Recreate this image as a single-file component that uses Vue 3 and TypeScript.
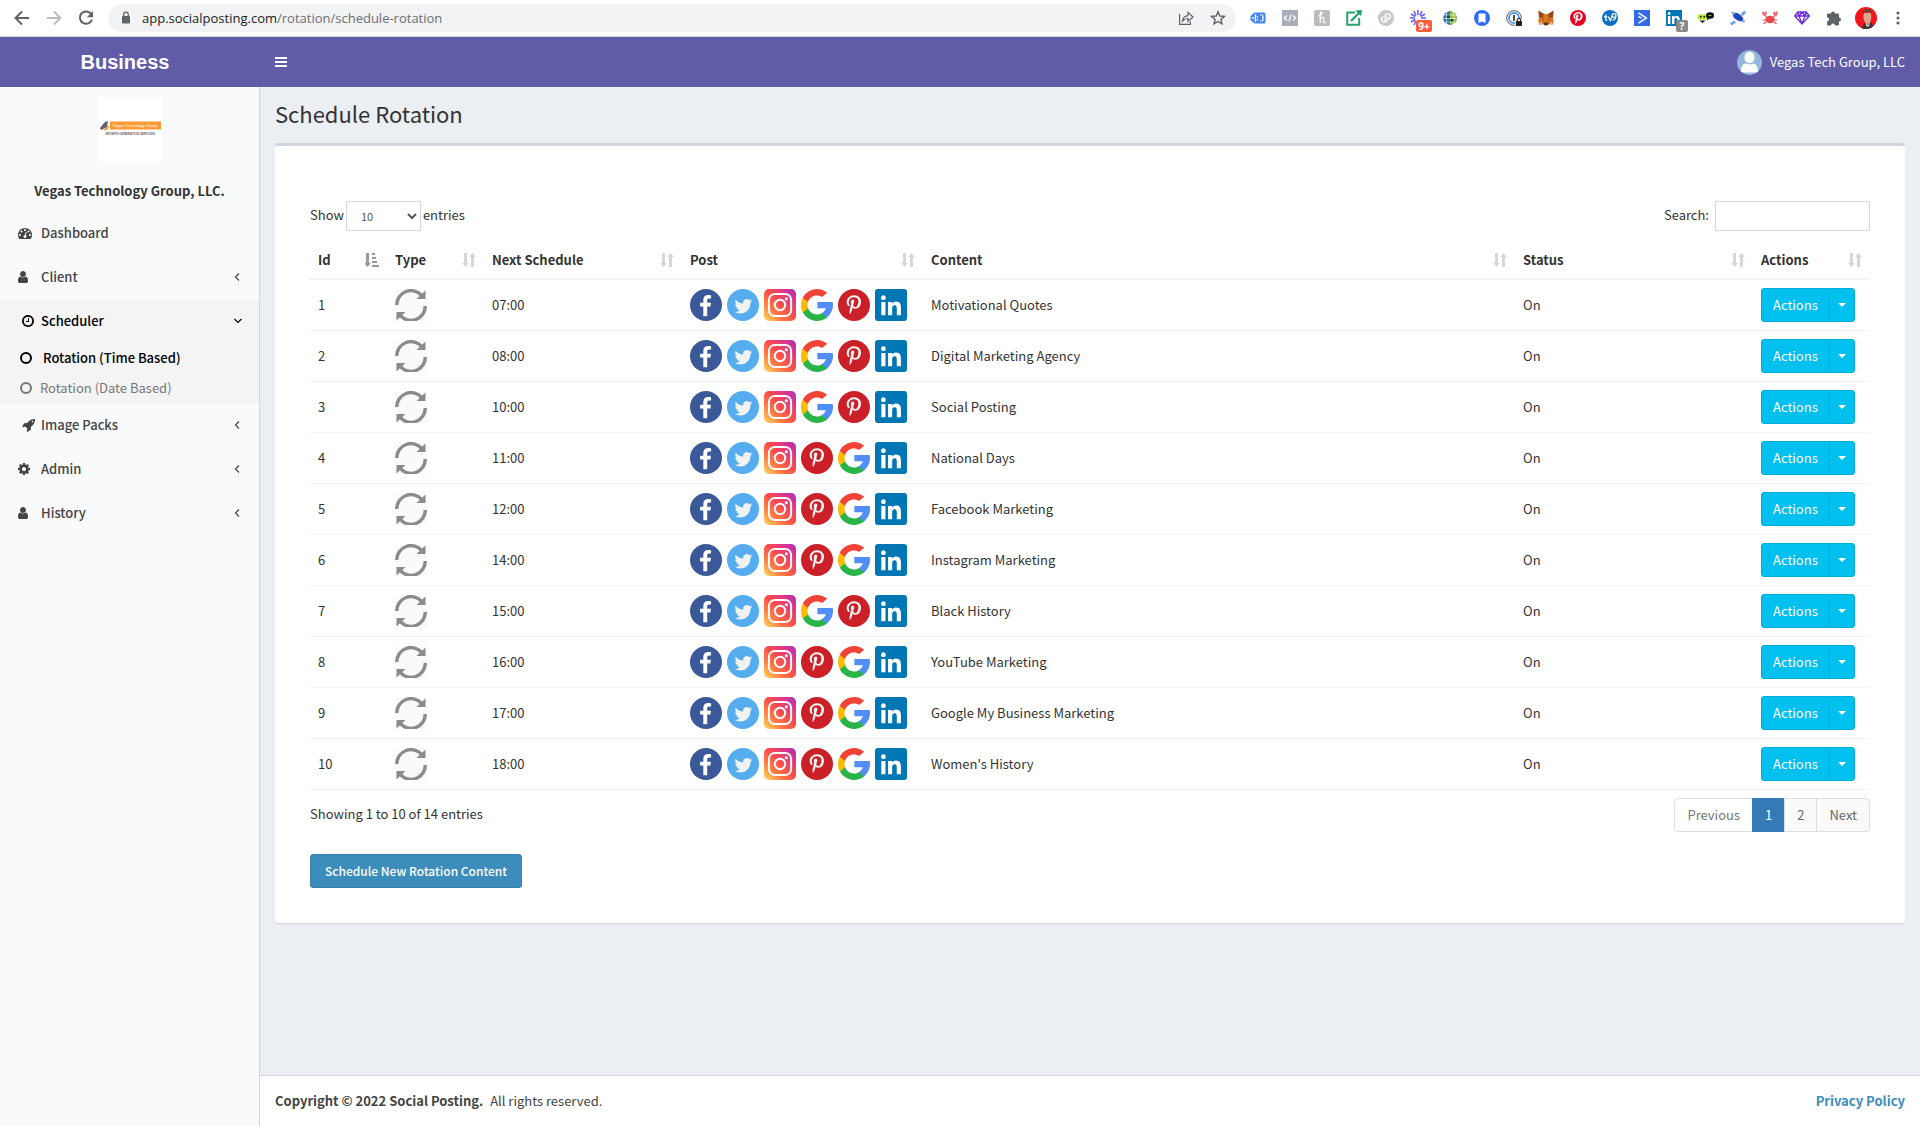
<script setup lang="ts">
import { ref } from 'vue'

type Network = 'facebook' | 'twitter' | 'instagram' | 'google' | 'pinterest' | 'linkedin'

interface Rotation {
  id: number
  time: string
  content: string
  networks: Network[]
}

interface MenuItem {
  label: string
  icon: string
  box: string
  width: number
  inset?: boolean
  arrow?: boolean
  open?: boolean
}

const googleFirst: Network[] = ['facebook', 'twitter', 'instagram', 'google', 'pinterest', 'linkedin']
const pinterestFirst: Network[] = ['facebook', 'twitter', 'instagram', 'pinterest', 'google', 'linkedin']

const rotations: Rotation[] = [
  { id: 1, time: '07:00', content: 'Motivational Quotes', networks: googleFirst },
  { id: 2, time: '08:00', content: 'Digital Marketing Agency', networks: googleFirst },
  { id: 3, time: '10:00', content: 'Social Posting', networks: googleFirst },
  { id: 4, time: '11:00', content: 'National Days', networks: pinterestFirst },
  { id: 5, time: '12:00', content: 'Facebook Marketing', networks: pinterestFirst },
  { id: 6, time: '14:00', content: 'Instagram Marketing', networks: pinterestFirst },
  { id: 7, time: '15:00', content: 'Black History', networks: googleFirst },
  { id: 8, time: '16:00', content: 'YouTube Marketing', networks: pinterestFirst },
  { id: 9, time: '17:00', content: 'Google My Business Marketing', networks: pinterestFirst },
  { id: 10, time: '18:00', content: "Women's History", networks: pinterestFirst },
]

const columns = ['Id', 'Type', 'Next Schedule', 'Post', 'Content', 'Status', 'Actions']

const userPath =
  'M1536 1399q0 109-62.5 187t-150.5 78h-854q-88 0-150.5-78t-62.5-187q0-85 8.5-160.5t31.5-152 58.5-131 94-89 134.5-34.5q131 128 313 128t313-128q76 0 134.5 34.5t94 89 58.5 131 31.5 152 8.5 160.5zm-256-887q0 159-112.5 271.5t-271.5 112.5-271.5-112.5-112.5-271.5 112.5-271.5 271.5-112.5 271.5 112.5 112.5 271.5z'
const gaugePath =
  'M384 1152q0-53-37.5-90.5t-90.5-37.5-90.5 37.5-37.5 90.5 37.5 90.5 90.5 37.5 90.5-37.5 37.5-90.5zm192-448q0-53-37.5-90.5t-90.5-37.5-90.5 37.5-37.5 90.5 37.5 90.5 90.5 37.5 90.5-37.5 37.5-90.5zm428 481l101-382q6-26-7.5-48.5t-38.5-29.5-48 6.500-30 39.500l-101 382q-60 5-107 43.500t-63 98.500q-20 77 20 146t117 89 146-20 89-117q16-60-6-117t-72-91zm660-33q0-53-37.500-90.500t-90.500-37.500-90.500 37.500-37.500 90.500 37.500 90.500 90.500 37.500 90.500-37.500 37.500-90.500zm-640-640q0-53-37.500-90.500t-90.500-37.500-90.500 37.500-37.500 90.500 37.500 90.500 90.500 37.500 90.500-37.500 37.500-90.500zm448 192q0-53-37.500-90.500t-90.500-37.500-90.500 37.500-37.500 90.500 37.500 90.500 90.500 37.500 90.500-37.500 37.500-90.500zm320 448q0 261-141 483-19 29-54 29h-1402q-35 0-54-29-141-221-141-483 0-182 71-348t191-286 286-191 348-71 348 71 286 191 191 286 71 348z'
const clockPath =
  'M1024 544v448q0 14-9 23t-23 9h-320q-14 0-23-9t-9-23v-64q0-14 9-23t23-9h224v-352q0-14 9-23t23-9h64q14 0 23 9t9 23zm416 352q0-148-73-273t-198-198-273-73-273 73-198 198-73 273 73 273 198 198 273 73 273-73 198-198 73-273zm224 0q0 209-103 385.5t-279.5 279.5-385.5 103-385.5-103-279.5-279.5-103-385.5 103-385.5 279.5-279.5 385.5-103 385.5 103 279.5 279.5 103 385.5z'
const rocketPath =
  'M1440 448q0-40-28-68t-68-28-68 28-28 68 28 68 68 28 68-28 28-68zm224-288q0 249-75.5 430.5t-253.5 360.5q-81 80-195 176l-20 379q-2 16-16 26l-384 224q-7 4-16 4-12 0-23-9l-64-64q-13-14-8-32l85-276-281-281-276 85q-3 1-9 1-14 0-23-9l-64-64q-17-19-5-39l224-384q10-14 26-16l379-20q96-114 176-195 188-187 358-258t431-71q14 0 24 9.500t10 22.500z'
const cogPath =
  'M1152 896q0-106-75-181t-181-75-181 75-75 181 75 181 181 75 181-75 75-181zm512-109v222q0 12-8 23t-20 13l-185 28q-19 54-39 91 35 50 107 138 10 12 10 25t-9 23q-27 37-99 108t-94 71q-12 0-26-9l-138-108q-44 23-91 38-16 136-29 186-7 28-36 28h-222q-14 0-24.5-8.5t-11.5-21.5l-28-184q-49-16-90-37l-141 107q-10 9-25 9-14 0-25-11-126-114-165-168-7-10-7-23 0-12 8-23 15-21 51-66.5t54-70.5q-27-50-41-99l-183-27q-13-2-21-12.5t-8-23.500v-222q0-12 8-23t19-13l186-28q14-46 39-92-40-57-107-138-10-12-10-24 0-10 9-23 26-36 98.500-107.500t94.500-71.500q13 0 26 10l138 107q44-23 91-38 16-136 29-186 7-28 36-28h222q14 0 24.500 8.500t11.500 21.500l28 184q49 16 90 37l142-107q9-9 24-9 13 0 25 10 129 119 165 170 7 8 7 22 0 12-8 23-15 21-51 66.500t-54 70.500q26 50 41 98l183 28q13 2 21 12.500t8 23.500z'

const menu: MenuItem[] = [
  { label: 'Dashboard', icon: gaugePath, box: '0 0 1792 1792', width: 14 },
  { label: 'Client', icon: userPath, box: '256 0 1280 1792', width: 10, arrow: true },
  { label: 'Scheduler', icon: clockPath, box: '128 0 1536 1792', width: 12, inset: true, arrow: true, open: true },
  { label: 'Image Packs', icon: rocketPath, box: '0 0 1664 1792', width: 13, inset: true, arrow: true },
  { label: 'Admin', icon: cogPath, box: '128 0 1536 1792', width: 12, arrow: true },
  { label: 'History', icon: userPath, box: '256 0 1280 1792', width: 10, arrow: true },
]

const pageSize = ref('10')
const query = ref('')
const address = ref('app.socialposting.com')
</script>

<template>
  <div class="window">
    <div class="toolbar">
      <button class="tool" aria-label="Back">
        <svg width="20" height="20" viewBox="0 0 20 20" fill="none" stroke="#5f6368" stroke-width="2"><path d="M17 10H4M10 3.500L3.500 10l6.500 6.500" /></svg>
      </button>
      <button class="tool" aria-label="Forward">
        <svg width="20" height="20" viewBox="0 0 20 20" fill="none" stroke="#babcbe" stroke-width="2"><path d="M3 10h13M10 3.500l6.500 6.500-6.500 6.500" /></svg>
      </button>
      <button class="tool" aria-label="Reload">
        <svg width="20" height="20" viewBox="0 0 20 20"><path d="M15.300 6.200A6.200 6.200 0 1 0 16 11.500" fill="none" stroke="#5f6368" stroke-width="2" /><path d="M17 3v6.200h-6.200z" fill="#5f6368" /></svg>
      </button>
      <div class="omnibox">
        <svg width="12" height="14" viewBox="0 0 12 14"><rect x="2" y="5" width="8" height="7.500" rx="1" fill="#5f6368" /><path d="M3.700 5.500V3.400a2.300 2.300 0 0 1 4.600 0v2.100" fill="none" stroke="#5f6368" stroke-width="1.300" /></svg>
        <p class="url">{{ address }}<span>/rotation/schedule-rotation</span></p>
        <button class="tool" aria-label="Share">
          <svg width="16" height="16" viewBox="0 0 16 16" fill="none" stroke="#5f6368" stroke-width="1.200"><path d="M1.600 4v10.400h10.800v-3M4.500 11C5 7.500 7 5.800 10 5.600V2.400L15 7l-5 4.400V8.500C7.500 8.500 6 9.200 4.500 11z" /></svg>
        </button>
        <button class="tool" aria-label="Bookmark">
          <svg width="16" height="16" viewBox="0 0 16 16" fill="none" stroke="#5f6368" stroke-width="1.400"><path d="M8 1.800l1.800 4.200 4.600.4-3.500 3 1.100 4.500L8 11.500l-4 2.400 1.100-4.500-3.500-3L6.200 6z" /></svg>
        </button>
      </div>
      <div class="extensions">
        <span class="ext"><svg width="16" height="16" viewBox="0 0 16 16"><path d="M4.500 2.500H14a1.500 1.500 0 0 1 1.500 1.500v8a1.500 1.500 0 0 1-1.500 1.500H4.500L.5 10V6z" fill="#4285f4" /><path d="M5.500 4v8M7.500 6v1.500M7.500 9v1.500M10 4.800h1M10 11.200h1M12 4.500c1.300 2 1.300 5 0 7" fill="none" stroke="#fff" stroke-width="1.300" /><circle cx="3" cy="8" r="1" fill="#fff" /></svg></span>
        <span class="ext"><svg width="16" height="16" viewBox="0 0 16 16"><path d="M0 0h16v16H0z" fill="#a9afba" /><path d="M5 5.500L2.300 8 5 10.500M11 5.500L13.700 8 11 10.500M9 4.500l-2 7" fill="none" stroke="#fff" stroke-width="1.200" /></svg></span>
        <span class="ext"><svg width="16" height="16" viewBox="0 0 16 16"><rect width="16" height="16" rx="1.500" fill="#bcbcbc" /><path d="M4.500 6c2-.5 4-2 3.500-3.500S6 3 6.200 6.500V13M6.200 9c1.500-2.200 3.800-2.400 3.600 0l-.2 2.500c0 1.500 1 1.500 2 .7" fill="none" stroke="#fff" stroke-width="1.200" /></svg></span>
        <span class="ext"><svg width="16" height="16" viewBox="0 0 16 16"><path d="M9 2.500H1.200v12.300h12V8" fill="none" stroke="#2da36b" stroke-width="2" /><path d="M5 11L13 3" stroke="#1f9e62" stroke-width="2.200" /><path d="M9.500.6L15.800 0l-.6 6.300z" fill="#1f9e62" /></svg></span>
        <span class="ext"><svg width="16" height="16" viewBox="0 0 16 16"><circle cx="8" cy="8" r="8" fill="#c8c8c8" /><path d="M7 11V6.500a2.700 2.700 0 1 1 2.700 2.700M9 6v3.300a2.700 2.700 0 1 1-3.500-2.500" fill="none" stroke="#fff" stroke-width="1.200" /></svg></span>
        <span class="ext"><svg width="16" height="16" viewBox="0 0 16 16"><path d="M8 0v5M4 1.100l2 4.400M12 1.100l-2 4.400M1.100 4l4.200 2.500M14.900 4l-4.200 2.500M0 8h5M16 8h-5M1.100 12l4.200-2.500M4 15l2-4.200M8 16v-5" stroke="#635bff" stroke-width="1.500" /></svg><b class="badge hot">9+</b></span>
        <span class="ext"><svg width="16" height="16" viewBox="0 0 16 16"><circle cx="8" cy="8" r="6.800" fill="#1c6fa8" /><path d="M8 1.200a6.800 6.800 0 0 1 0 13.600z" fill="#9cc23a" /><path d="M2 5h12M1.500 8.500h13M3 12h10M5 2c-1 4-1 8 0 12M11 2c1.500 4 1.500 8 0 12" fill="none" stroke="#dff0ea" stroke-width=".7" /><path d="M5 5.500h3v2.500H5zM8.500 9h3v2.500h-3z" fill="#174a3c" /></svg></span>
        <span class="ext"><svg width="16" height="16" viewBox="0 0 16 16"><circle cx="8" cy="8" r="8" fill="#2f6bff" /><path d="M5.500 3.500h5a1 1 0 0 1 1 1V13L8 11.500 4.500 13V4.500a1 1 0 0 1 1-1z" fill="#fff" /></svg></span>
        <span class="ext"><svg width="16" height="16" viewBox="0 0 16 16"><circle cx="8" cy="8" r="7.300" fill="#fff" stroke="#7b7f85" stroke-width="1.200" /><circle cx="8" cy="8" r="5" fill="none" stroke="#4a9be8" stroke-width="1.800" /><path d="M8 5v6" stroke="#222" stroke-width="1.600" /><rect x="8.800" y="9" width="7.200" height="7" fill="#fff" /><rect x="9.800" y="11" width="6.200" height="5" rx=".8" fill="#222" /><path d="M11.200 11.200v-1a1.700 1.700 0 0 1 3.400 0v1" fill="none" stroke="#222" stroke-width="1.200" /></svg></span>
        <span class="ext"><svg width="16" height="16" viewBox="0 0 16 16"><path d="M.5.800L6 4h4L15.500.800 15 8l.8 3-1.300 4-3.500-1-1.200 1.500H6.200L5 14l-3.500 1-1.300-4L1 8z" fill="#e2761b" /><path d="M.5.800L6 4 4.800 8 1 7.500zM15.500.800L10 4l1.200 4 3.800-.5z" fill="#8f4a1f" /><path d="M4.500 8.500l2 1.300-1.600.4zM11.500 8.500l-2 1.300 1.600.4z" fill="#233447" /><path d="M5.500 12.500h5L9.800 15H6.200z" fill="#4b3a35" /><path d="M5 13l-3.500 2 .5-3zM11 13l3.500 2-.5-3z" fill="#d7c1b3" /></svg></span>
        <span class="ext"><svg width="16" height="16" viewBox="0 0 16 16"><circle cx="8" cy="8" r="8" fill="#e60023" /><use href="#pin-p" transform="translate(1.900 2.200) scale(.0068)" fill="#fff" stroke="#fff" stroke-width="60" /></svg></span>
        <span class="ext"><svg width="16" height="16" viewBox="0 0 16 16"><circle cx="8" cy="8" r="8" fill="#0b6fc2" /><path d="M3.700 4.500v4.700c0 1.100.6 1.300 1.600 1.100M2 6.800h3.300M6.300 6.500l2 4 2-4.500" fill="none" stroke="#fff" stroke-width="1.300" /><circle cx="12" cy="5.500" r="1.900" fill="none" stroke="#fff" stroke-width="1.200" /><path d="M13.900 5.500c0 3-1.500 4.500-3.500 4.700" fill="none" stroke="#fff" stroke-width="1.200" /></svg></span>
        <span class="ext"><svg width="16" height="16" viewBox="0 0 16 16"><path d="M0 0h16v16H0z" fill="#356ae6" /><path d="M4.500 2.800l7.800 5.200-7.800 5.200M4.500 6.500L7.500 8.200" fill="none" stroke="#fff" stroke-width="1.500" /></svg></span>
        <span class="ext"><svg width="16" height="16" viewBox="0 0 16 16"><path d="M0 0h16v16H0z" fill="#0077b5" /><use href="#in-mark" transform="translate(-.6 -.2) scale(.7)" fill="#fff" /></svg><b class="badge dim">?</b></span>
        <span class="ext"><svg width="16" height="16" viewBox="0 0 16 16"><path d="M0 4.500h9v5H0z" fill="#b6e32a" /><path d="M2 6h1.500v1.500H2zM5.500 6H7v1.500H5.500z" fill="#111" /><path d="M1.500 10.500h6L4.500 13z" fill="#111" /><ellipse cx="12" cy="5.500" rx="4" ry="3.200" fill="#111" /><path d="M9.500 7.500L9 10.500l3-2.500z" fill="#111" /><path d="M10.500 5.500h3" stroke="#b6e32a" stroke-width=".8" /></svg></span>
        <span class="ext"><svg width="16" height="16" viewBox="0 0 16 16"><ellipse cx="8" cy="7" rx="6" ry="3.200" transform="rotate(35 8 7)" fill="#1e48b8" /><path d="M0 13.500l4-3 2 2-4.500 3zM10.500 4L14.500.500 16 3l-3.500 3zM1 2.500l3-.5 1.500 2-2 1zM12 10l3 .5-.500 2-3-.5z" fill="#6f9df2" /></svg></span>
        <span class="ext"><svg width="16" height="16" viewBox="0 0 16 16"><ellipse cx="8" cy="9.500" rx="4.600" ry="3.800" fill="#e5484d" /><path d="M0 2.500L1.500 1l.8 2L4 1l1 2.500L3.500 6 1 5.500zM16 2.500L14.500 1l-.8 2L12 1l-1 2.500L12.500 6l2.500-.5z" fill="#f2686c" /><path d="M3 5.500l2 2.500M13 5.500L11 8M4 10H.8M15.200 10H12M4 12l-2.500 1.800M12 12l2.500 1.800" stroke="#e5484d" stroke-width="1.200" /></svg></span>
        <span class="ext"><svg width="16" height="16" viewBox="0 0 16 16" fill="none" stroke="#6b2be0" stroke-width="1.300" stroke-linejoin="round"><path d="M3.800 2h8.400L15.300 6 8 14 .7 6zM.7 6h14.600M5 6l3 8 3-8M3.800 2L5 6l3-4 3 4 1.200-4" /></svg></span>
        <span class="ext"><svg width="16" height="16" viewBox="0 0 16 16"><path d="M5 3.500a2 2 0 0 1 4 0h3a1 1 0 0 1 1 1v3a2 2 0 0 1 0 4v3a1 1 0 0 1-1 1H9a2 2 0 0 0-4 0H2a1 1 0 0 1-1-1v-3a2 2 0 0 0 0-4v-3a1 1 0 0 1 1-1z" fill="#5f6368" /></svg></span>
        <span class="ext"><svg width="22" height="22" viewBox="0 0 22 22"><defs><clipPath id="face"><circle cx="11" cy="11" r="11" /></clipPath></defs><g clip-path="url(#face)"><path d="M0 0h22v22H0z" fill="#f5141c" /><path d="M7 22c0-3 1-5 3.500-6l4.500-1c2 1 3 3 3 7z" fill="#3a3436" /><path d="M8.500 6h7.500l.3 5c-.3 4-2 6-3.800 6s-3.500-3-4-6z" fill="#dca58c" /><path d="M8 7.500c-.5-4 1.500-5.500 4.500-5.500s4.500 2 4 5.500L15 5H10z" fill="#6b4434" /><path d="M10.500 16l2.500 2 2-2.500-1 4h-2.500z" fill="#e9d7cf" /></g></svg></span>
        <button class="tool ext" aria-label="Menu"><svg width="4" height="14" viewBox="0 0 4 14" fill="#5f6368"><circle cx="2" cy="2" r="1.600" /><circle cx="2" cy="7" r="1.600" /><circle cx="2" cy="12" r="1.600" /></svg></button>
      </div>
    </div>

    <svg class="shapes" aria-hidden="true">
      <defs>
        <linearGradient id="insta" x1="0" y1="1" x2="1" y2="0">
          <stop offset="0" stop-color="#ffdc5e" /><stop offset=".3" stop-color="#ff7a45" /><stop offset=".55" stop-color="#fb4a4e" /><stop offset=".8" stop-color="#d9368f" /><stop offset="1" stop-color="#a62fc0" />
        </linearGradient>
        <path id="pin-p" d="M256 597q0-108 37.5-203.5t103.5-166.5 152-123 185-78 202-26q158 0 294 66.5t221 193.5 85 287q0 96-19 188t-60 177-100 149.5-145 103-189 38.5q-68 0-135-32t-96-88q-10 39-28 112.5t-23.5 95-20.5 71-26 71-32 62.5-46 77.5-62 86.5l-14 5-9-10q-15-157-15-188 0-92 21.5-206.5t66.5-287.5 52-203q-32-65-32-169 0-83 52-156t132-73q61 0 95 40.5t34 102.500q0 66-44 191t-44 187q0 63 45 104.500t109 41.500q55 0 102-25t78.500-68 56-95 38-110.500 20-111 6.500-99.500q0-173-109.500-269.500t-285.500-96.500q-200 0-334 129.500t-134 328.500q0 44 12.500 85t27 65 27 45.500 12.500 30.500q0 28-15 73t-37 45q-2 0-17-3-51-15-90.500-56t-61-94.500-32.500-108-11-106.500z" />
        <path id="in-mark" d="M20.447 20.452h-3.554v-5.569c0-1.328-.027-3.037-1.852-3.037-1.853 0-2.136 1.445-2.136 2.939v5.667H9.351V9h3.414v1.561h.046c.477-.9 1.637-1.850 3.370-1.850 3.601 0 4.267 2.370 4.267 5.455v6.286zM5.337 7.433c-1.144 0-2.063-.926-2.063-2.065 0-1.138.92-2.063 2.063-2.063 1.140 0 2.064.925 2.064 2.063 0 1.139-.925 2.065-2.064 2.065zm1.782 13.019H3.555V9h3.564v11.452z" />
        <g id="net-facebook"><circle cx="16" cy="16" r="16" fill="#3b5998" /><path transform="translate(4 6) scale(.0127)" fill="#fff" d="M1343 12v264h-157q-86 0-116 36t-30 108v189h293l-39 296h-254v759h-306v-759h-255v-296h255v-218q0-186 104-288.500t277-102.500q147 0 228 12z" /></g>
        <g id="net-twitter"><circle cx="16" cy="16" r="16" fill="#55acee" /><path transform="translate(7.500 8.400) scale(.74)" fill="#f1f2f2" d="M23.953 4.570a10 10 0 01-2.825.775 4.958 4.958 0 002.163-2.723c-.951.555-2.005.959-3.127 1.184a4.920 4.920 0 00-8.384 4.482C7.690 8.095 4.067 6.130 1.640 3.162a4.822 4.822 0 00-.666 2.475c0 1.710.870 3.213 2.188 4.096a4.904 4.904 0 01-2.228-.616v.06a4.923 4.923 0 003.946 4.827 4.996 4.996 0 01-2.212.085 4.936 4.936 0 004.604 3.417 9.867 9.867 0 01-6.102 2.105c-.39 0-.779-.023-1.170-.067a13.995 13.995 0 007.557 2.209c9.053 0 13.998-7.496 13.998-13.985 0-.21 0-.42-.015-.63A9.935 9.935 0 0024 4.590z" /></g>
        <g id="net-instagram"><rect width="32" height="32" rx="5" fill="url(#insta)" /><rect x="4.900" y="4.900" width="22.200" height="22.200" rx="6" fill="none" stroke="#fff" stroke-width="2" /><circle cx="16" cy="16" r="5.200" fill="none" stroke="#fff" stroke-width="2" /><circle cx="22.300" cy="9.700" r="1.500" fill="#fff" /></g>
        <g id="net-google"><g transform="scale(.0625)"><path fill="#fbbb00" d="M113.470 309.408L95.648 375.940l-65.139 1.378C11.042 341.211 0 299.900 0 256c0-42.451 10.324-82.483 28.624-117.732h.014l57.992 10.632 25.404 57.644c-5.317 15.501-8.215 32.141-8.215 49.456.002 18.792 3.406 36.797 9.651 53.408z" /><path fill="#518ef8" d="M507.527 208.176C510.467 223.662 512 239.655 512 256c0 18.328-1.927 36.206-5.598 53.451-12.462 58.683-45.025 109.925-90.134 146.187l-.014-.014-73.044-3.727-10.338-64.535c29.932-17.554 53.324-45.025 65.646-77.911h-136.890V208.176z" /><path fill="#28b446" d="M416.253 455.624l.014.014C372.396 490.901 316.666 512 256 512c-97.491 0-182.252-54.491-225.491-134.681l82.961-67.910c21.619 57.698 77.278 98.771 142.530 98.771 28.047 0 54.323-7.582 76.870-20.818z" /><path fill="#f14336" d="M419.404 58.936l-82.933 67.896c-23.335-14.586-50.919-23.012-80.471-23.012-66.729 0-123.429 42.957-143.965 102.724l-83.397-68.276h-.014C71.230 56.123 157.060 0 256 0c62.115 0 119.068 22.126 163.404 58.936z" /></g></g>
        <g id="net-pinterest"><circle cx="16" cy="16" r="16" fill="#cb2027" /><use href="#pin-p" transform="translate(5.800 6.300) scale(.0112)" fill="#f1f2f2" /></g>
        <g id="net-linkedin"><rect width="32" height="32" rx="3" fill="#0077b5" /><use href="#in-mark" transform="translate(2.200 2.500) scale(1.160)" fill="#fff" /></g>
        <g id="cycle"><path d="M0 1h32v31H0z" fill="#fafafa" /><g fill="none" stroke="#8b8b8b" stroke-width="3.400"><path d="M1.700 16A14.300 14.300 0 0 1 27 6.800" /><path d="M30.300 17A14.300 14.300 0 0 1 5 26.200" /></g><path d="M21.500 10h9V1.500zM10.500 23h-9v8.500z" fill="#8b8b8b" /></g>
      </defs>
    </svg>

    <header class="topbar">
      <a class="brand" href="#">Business</a>
      <button class="burger" aria-label="Toggle navigation"><i></i><i></i><i></i></button>
      <a class="account" href="#">
        <svg width="25" height="25" viewBox="0 0 25 25"><defs><clipPath id="disc"><circle cx="12.500" cy="12.500" r="12.500" /></clipPath></defs><g clip-path="url(#disc)"><path d="M0 0h25v25H0z" fill="#93b8dc" /><rect x="7.500" y="1.800" width="10" height="11.500" rx="5" fill="#fff" /><path d="M4 22.500c0-6 1.500-9 5-9 2 1.200 5 1.200 7 0 3.500 0 5 3 5 9z" fill="#fff" /></g></svg>
        <span>Vegas Tech Group, LLC</span>
      </a>
    </header>

    <div class="body">
      <aside class="sidebar">
        <div class="profile">
          <svg width="64" height="64" viewBox="0 0 64 64">
            <path d="M0 0h64v64H0z" fill="#fff" />
            <path d="M12 24.500h51v8H12z" fill="#fb9a35" />
            <path d="M2 31l5-6 3-1-1 6-6 3z" fill="#5e6270" /><path d="M5 33l5-4.500 1 1.500-2 3z" fill="#fb9a35" />
            <text x="37" y="30" text-anchor="middle" font-size="4" font-weight="400" fill="#fff" font-family="Liberation Sans, sans-serif">Vegas Technology Group</text>
            <text x="32" y="38" text-anchor="middle" font-size="3" fill="#666" font-family="Liberation Sans, sans-serif">GROWTH GENERATION SERVICES</text>
          </svg>
          <p>Vegas Technology Group, LLC.</p>
        </div>
        <nav>
          <div v-for="item in menu" :key="item.label" :class="{ open: item.open }">
            <a class="item" href="#">
              <span class="slot" :class="{ inset: item.inset }">
                <svg :width="item.width" height="14" :viewBox="item.box" fill="currentColor"><path :d="item.icon" /></svg>
              </span>
              <span class="label">{{ item.label }}</span>
              <svg v-if="item.arrow" class="arrow" width="10" height="10" viewBox="0 0 10 10" fill="none" stroke="currentColor" stroke-width="1.200">
                <path :d="item.open ? 'M1.500 3L5 6.500 8.500 3' : 'M6 1.500L2.500 5 6 8.500'" />
              </svg>
            </a>
            <template v-if="item.open">
              <a class="sub current" href="#"><i></i>Rotation (Time Based)</a>
              <a class="sub" href="#"><i></i>Rotation (Date Based)</a>
            </template>
          </div>
        </nav>
      </aside>

      <div class="page">
        <h1>Schedule Rotation</h1>
        <main class="box">
          <div class="controls">
            <label>Show
              <select v-model="pageSize"><option>10</option><option>25</option><option>50</option><option>100</option></select>
              entries</label>
            <label class="search">Search: <input v-model="query" type="search" /></label>
          </div>

          <table>
            <colgroup>
              <col class="c-id" /><col class="c-type" /><col class="c-next" /><col class="c-post" /><col /><col class="c-status" /><col class="c-actions" />
            </colgroup>
            <thead>
              <tr>
                <th v-for="(column, i) in columns" :key="column" scope="col">
                  <div class="head">
                    {{ column }}
                    <svg v-if="i === 0" width="14" height="14" viewBox="0 0 14 14" fill="#999"><path d="M1 0h3v10h2L2.500 14-1 10h2zM7 0h3v2H7zM7 4h4v2H7zM7 8h5v2H7zM7 12h7v2H7z" /></svg>
                    <svg v-else width="14" height="14" viewBox="0 0 14 14" fill="#d6d6d6"><path d="M2 0h3v10h2L3.500 14 0 10h2zM9 14h3V4h2L10.500 0 7 4h2z" /></svg>
                  </div>
                </th>
              </tr>
            </thead>
            <tbody>
              <tr v-for="row in rotations" :key="row.id">
                <td>{{ row.id }}</td>
                <td><svg class="pic" width="32" height="32" viewBox="0 0 32 32"><use href="#cycle" /></svg></td>
                <td>{{ row.time }}</td>
                <td>
                  <div class="nets">
                    <svg v-for="net in row.networks" :key="net" width="32" height="32" viewBox="0 0 32 32"><use :href="'#net-' + net" /></svg>
                  </div>
                </td>
                <td>{{ row.content }}</td>
                <td>On</td>
                <td>
                  <div class="split">
                    <button>Actions</button>
                    <button class="caret" aria-label="More actions"><i></i></button>
                  </div>
                </td>
              </tr>
            </tbody>
          </table>

          <div class="summary">
            <p>Showing 1 to 10 of 14 entries</p>
            <nav class="pages" aria-label="Pages">
              <a class="off" href="#">Previous</a>
              <a class="on" href="#">1</a>
              <a href="#">2</a>
              <a href="#">Next</a>
            </nav>
          </div>
          <button class="primary">Schedule New Rotation Content</button>
        </main>
        <footer>
          <p><strong>Copyright © 2022 Social Posting.</strong> <span>All rights reserved.</span></p>
          <a href="#">Privacy Policy</a>
        </footer>
      </div>
    </div>
  </div>
</template>

<style>
body {
  margin: 0;
}
</style>

<style scoped>
.window {
  display: flex;
  flex-direction: column;
  min-height: 100vh;
  font: 400 13px/20px 'Noto Sans CJK SC', 'Source Sans Pro', sans-serif;
  color: #333;
  background: #fff;
}
.window * {
  box-sizing: border-box;
}
svg {
  display: block;
  flex: none;
}
button,
input,
select {
  font: inherit;
  color: inherit;
  margin: 0;
}
button {
  cursor: pointer;
}
a {
  color: inherit;
  text-decoration: none;
}
p {
  margin: 0;
}
.shapes {
  position: absolute;
  width: 0;
  height: 0;
}

/* browser toolbar */
.toolbar {
  display: flex;
  align-items: center;
  height: 37px;
  padding-left: 6px;
  border-bottom: 1px solid #d5d7da;
}
.tool {
  display: flex;
  align-items: center;
  justify-content: center;
  width: 32px;
  height: 28px;
  padding: 0;
  border: 0;
  background: none;
}
.omnibox {
  display: flex;
  flex: 1;
  align-items: center;
  height: 28px;
  margin: 0 6px;
  padding: 0 2px 0 12px;
  border-radius: 14px;
  background: #f1f3f4;
}
.url {
  flex: 1;
  margin-left: 10px;
  font: 13px/20px 'Open Sans', 'Segoe UI', sans-serif;
  color: #202124;
}
.url span {
  color: #6b6f74;
}
.extensions {
  display: flex;
  padding-right: 6px;
}
.ext {
  position: relative;
  display: flex;
  align-items: center;
  justify-content: center;
  width: 32px;
  height: 28px;
}
.badge {
  position: absolute;
  top: 16px;
  height: 12px;
  border-radius: 2px;
  font: 700 10px/12px 'Open Sans', sans-serif;
  text-align: center;
  color: #fff;
}
.hot {
  left: 14px;
  width: 16px;
  background: #ff5a3c;
}
.dim {
  left: 18px;
  width: 12px;
  background: #8a8a8a;
}

/* application header */
.topbar {
  display: flex;
  align-items: center;
  height: 50px;
  padding-right: 15px;
  background: #605ca8;
  color: #fff;
}
.brand {
  width: 250px;
  font: 700 20px/50px 'Liberation Sans', Arial, sans-serif;
  text-align: center;
}
.burger {
  display: flex;
  flex-direction: column;
  gap: 2px;
  width: 62px;
  padding: 17px 25px;
  border: 0;
  background: none;
}
.burger i {
  height: 2px;
  background: #fff;
}
.account {
  display: flex;
  align-items: center;
  gap: 8px;
  margin-left: auto;
}

/* sidebar */
.body {
  display: flex;
  flex: 1;
}
.sidebar {
  flex: none;
  width: 260px;
  border-right: 1px solid #d2d6de;
  background: #f9fafc;
}
.profile {
  display: flex;
  flex-direction: column;
  align-items: center;
  gap: 20px;
  height: 124px;
  padding-top: 10px;
  font-weight: 700;
}
.item {
  display: flex;
  align-items: center;
  height: 44px;
  padding: 0 16px 0 18px;
  font-weight: 500;
  color: #444;
}
.slot {
  width: 23px;
}
.inset {
  padding-left: 4px;
}
.label {
  flex: 1;
}
.open {
  background: #f4f4f5;
}
.open .item,
.sub.current {
  color: #000;
}
.sub {
  display: flex;
  align-items: center;
  gap: 8px;
  height: 30px;
  padding-left: 20px;
  color: #777;
}
.sub.current {
  gap: 11px;
  font-weight: 500;
}
.sub i {
  width: 12px;
  height: 12px;
  border: 2px solid currentColor;
  border-radius: 50%;
}

/* page */
.page {
  display: flex;
  flex: 1;
  flex-direction: column;
  background: #ebeef3;
}
h1 {
  margin: 0;
  padding: 11px 15px 15px;
  font-size: 22px;
  line-height: 30px;
  font-weight: 400;
}
.box {
  margin: 0 15px;
  padding: 55px 35px 35px;
  border-top: 3px solid #d2d6de;
  border-radius: 3px;
  background: #fff;
  box-shadow: 0 1px 1px rgba(0, 0, 0, 0.1);
}
.controls {
  display: flex;
  justify-content: space-between;
  margin-bottom: 11px;
}
.controls label {
  display: flex;
  gap: 2px;
  line-height: 28px;
}
.controls .search {
  gap: 6px;
}
.controls select {
  width: 75px;
  height: 30px;
  padding: 5px 10px;
  border: 1px solid #d2d6de;
  border-radius: 0;
  background: #fff;
  font-size: 11px;
  line-height: 18px;
  color: #555;
}
.controls input {
  width: 155px;
  height: 30px;
  padding: 5px 10px;
  border: 1px solid #d2d6de;
  border-radius: 0;
}
table {
  width: 100%;
  table-layout: fixed;
  border-collapse: separate;
  border-spacing: 0;
}
.c-id {
  width: 77px;
}
.c-type {
  width: 97px;
}
.c-next {
  width: 198px;
}
.c-post {
  width: 241px;
}
.c-status {
  width: 238px;
}
.c-actions {
  width: 117px;
}
th,
td {
  padding: 8px;
  text-align: left;
  vertical-align: middle;
  border-bottom: 1px solid #f4f4f4;
}
th {
  border-bottom-width: 2px;
}
.head {
  display: flex;
  align-items: center;
  justify-content: space-between;
}
.nets {
  display: flex;
  gap: 5px;
}
.split {
  display: flex;
}
.split button {
  height: 34px;
  padding: 6px 11px;
  border: 1px solid #00acd6;
  border-radius: 3px 0 0 3px;
  background: #00c0ef;
  color: #fff;
  line-height: 20px;
}
.split .caret {
  width: 26px;
  margin-left: -1px;
  padding: 0 8px;
  border-radius: 0 3px 3px 0;
}
.caret i {
  display: block;
  border: 4px solid transparent;
  border-top-color: #fff;
  border-bottom: 0;
}
.summary {
  display: flex;
  justify-content: space-between;
  padding-top: 8px;
}
.summary p {
  line-height: 32px;
}
.pages {
  display: flex;
}
.pages a {
  height: 34px;
  margin-left: -1px;
  padding: 6px 12px;
  border: 1px solid #ddd;
  background: #fafafa;
  color: #666;
}
.pages a:first-child {
  border-radius: 4px 0 0 4px;
}
.pages a:last-child {
  border-radius: 0 4px 4px 0;
}
.pages .off {
  background: #fff;
  color: #777;
}
.pages .on {
  border-color: #337ab7;
  background: #337ab7;
  color: #fff;
}
.primary {
  display: block;
  height: 34px;
  margin-top: 22px;
  padding: 6px 14px;
  border: 1px solid #367fa9;
  border-radius: 3px;
  background: #3c8dbc;
  font-size: 12px;
  font-weight: 500;
  line-height: 20px;
  color: #fff;
}
footer {
  display: flex;
  justify-content: space-between;
  margin-top: auto;
  padding: 15px;
  border-top: 1px solid #d2d6de;
  background: #fff;
  color: #444;
}
footer span {
  margin-left: 4px;
}
footer a {
  font-weight: 700;
  color: #3c8dbc;
}
</style>
